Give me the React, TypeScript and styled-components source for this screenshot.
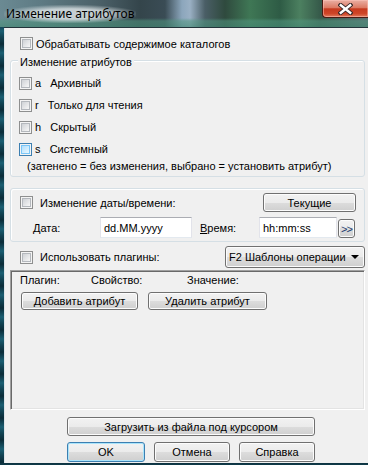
import styled, { createGlobalStyle } from 'styled-components';

const GlobalStyle = createGlobalStyle`
  html, body { margin: 0; padding: 0; }
  body {
    background: #0c2a34;
    font-family: "Liberation Sans", Arial, sans-serif;
    font-size: 11px;
    color: #000;
  }
`;

const Frame = styled.div`
  width: 368px;
  height: 465px;
  overflow: hidden;
  display: flex;
  flex-direction: column;
  background: repeating-linear-gradient(180deg, #0b2c38 0px, #1b5e72 9px, #124454 15px, #0b2c38 22px);
`;

const TitleBar = styled.div`
  height: 27px;
  flex-shrink: 0;
  display: flex;
  align-items: flex-start;
  background:
    linear-gradient(180deg, rgba(0, 0, 0, 0) 18px, rgba(80, 150, 128, 0.55) 21px, rgba(70, 140, 118, 0.65) 27px),
    linear-gradient(90deg, #6b8a93 0px, #5e7b84 40px, #4b6068 100px, #34454b 140px, #3a4c55 165px, #8ca6bc 182px,
      #9ab0c4 190px, #4a5e66 205px, #2f4a3e 225px, #3f7755 250px, #2e5b45 280px, #4c8060 300px, #365a4a 320px, #596e72 368px);
`;

const Title = styled.div`
  margin: 5px 0 0 4px;
  padding: 1px 2px;
  font-family: "Noto Sans", "Open Sans", sans-serif;
  font-size: 12px;
  line-height: 16px;
  color: #000;
  background: radial-gradient(ellipse at center, rgba(235, 240, 242, 0.75) 40%, rgba(235, 240, 242, 0) 75%);
  flex: 0 0 auto;
`;

const Spacer = styled.div`
  flex: 1;
`;

const CloseButton = styled.div`
  width: 46px;
  height: 18px;
  box-sizing: border-box;
  border: 1px solid #4a1a12;
  border-top: none;
  border-right: none;
  border-radius: 0 0 0 4px;
  display: flex;
  align-items: center;
  justify-content: center;
  background: linear-gradient(180deg, #eab0a4 0%, #dc7a64 45%, #c63a1f 52%, #cf4527 80%, #e07d5f 100%);
  box-shadow: inset 0 0 0 1px rgba(255, 200, 190, 0.5);
`;

const Client = styled.div`
  margin-left: 4px;
  height: 436px;
  box-sizing: border-box;
  border-top: 1px solid #22343a;
  background: #f0f0f0;
  padding: 0 3px 0 6px;
  display: flex;
  flex-direction: column;
  box-shadow: inset 1px 0 0 #dde4e8;
`;

const Box = styled.span<{ $hover?: boolean }>`
  position: relative;
  width: 13px;
  height: 13px;
  box-sizing: border-box;
  flex-shrink: 0;
  border: 1px solid ${(p) => (p.$hover ? '#3c7fb1' : '#8e8f8f')};
  background: #f4f4f4;
  &::after {
    content: "";
    position: absolute;
    left: 1px;
    top: 1px;
    right: 1px;
    bottom: 1px;
    box-sizing: border-box;
    border: 1px solid ${(p) => (p.$hover ? '#79c6f9' : '#b4b8bd')};
    background: ${(p) =>
      p.$hover
        ? 'linear-gradient(135deg, #b1dffd 0%, #e9f7fe 100%)'
        : 'linear-gradient(135deg, #cfd2d6 0%, #f7f7f7 100%)'};
  }
`;

const CheckRow = styled.label<{ $gap?: number; $indent?: number }>`
  display: flex;
  align-items: center;
  gap: ${(p) => p.$gap ?? 3}px;
  padding-left: ${(p) => p.$indent ?? 0}px;
  white-space: pre;
`;

const TopCheck = styled(CheckRow)`
  margin-top: 9px;
  height: 13px;
`;

const Group = styled.div<{ $mt: number }>`
  position: relative;
  margin-top: ${(p) => p.$mt}px;
  border: 1px solid #d5dfe5;
  border-radius: 3px;
  box-shadow: inset 1px 1px 0 #fff;
`;

const AttrGroup = styled(Group)`
  padding: 11px 0 4px 8px;
`;

const Caption = styled.span`
  position: absolute;
  top: -5px;
  left: 7px;
  padding: 0 2px;
  line-height: 13px;
  background: #f0f0f0;
`;

const AttrRow = styled(CheckRow)`
  height: 22px;
`;

const Note = styled.div`
  margin-left: 8px;
  line-height: 12px;
`;

const DateGroup = styled(Group)`
  padding: 4px 8px 3px 9px;
`;

const DateHead = styled.div`
  display: flex;
  justify-content: space-between;
  align-items: center;
  height: 19px;
`;

const DateRow = styled.div`
  margin-top: 5px;
  height: 21px;
  display: flex;
  align-items: center;
  padding-left: 13px;
`;

const FieldLabel = styled.span<{ $w: number; $ml?: number }>`
  width: ${(p) => p.$w}px;
  margin-left: ${(p) => p.$ml ?? 0}px;
  flex-shrink: 0;
`;

const TextBox = styled.div<{ $w: number }>`
  width: ${(p) => p.$w}px;
  height: 21px;
  box-sizing: border-box;
  background: #fff;
  border: 1px solid #e2e3ea;
  border-top-color: #abadb3;
  border-bottom-color: #e3e9ef;
  padding-left: 3px;
  display: flex;
  align-items: center;
  flex-shrink: 0;
`;

const Button = styled.div<{ $w: number; $h: number; $default?: boolean }>`
  width: ${(p) => p.$w}px;
  height: ${(p) => p.$h}px;
  box-sizing: border-box;
  flex-shrink: 0;
  display: flex;
  align-items: center;
  justify-content: center;
  border: 1px solid ${(p) => (p.$default ? '#3c7fb1' : '#707070')};
  border-radius: 3px;
  background: linear-gradient(180deg, #f2f2f2 0%, #ebebeb 50%, #dddddd 50%, #cfcfcf 100%);
  box-shadow: inset 0 0 0 1px ${(p) => (p.$default ? '#a9e4fb' : '#fcfcfc')};
  white-space: nowrap;
`;

const MoreButton = styled(Button)`
  margin-left: 1px;
  align-self: flex-end;
  color: #1e3c6e;
  letter-spacing: -1px;
`;

const PluginRow = styled.div`
  margin-top: 4px;
  height: 22px;
  display: flex;
  align-items: center;
  justify-content: space-between;
`;

const Combo = styled.div`
  width: 140px;
  height: 22px;
  box-sizing: border-box;
  border: 1px solid #707070;
  border-radius: 3px;
  background: linear-gradient(180deg, #f2f2f2 0%, #ebebeb 50%, #dddddd 50%, #cfcfcf 100%);
  box-shadow: inset 0 0 0 1px #fcfcfc;
  display: flex;
  align-items: center;
  justify-content: space-between;
  padding: 0 5px 0 3px;
`;

const Arrow = styled.span`
  width: 0;
  height: 0;
  border-left: 4px solid transparent;
  border-right: 4px solid transparent;
  border-top: 4px solid #000;
`;

const Panel = styled.div`
  margin-top: 2px;
  height: 140px;
  box-sizing: border-box;
  border-top: 1px solid #a0a0a0;
  border-left: 1px solid #a0a0a0;
  border-right: 1px solid #fff;
  border-bottom: 1px solid #fff;
  box-shadow: inset 1px 1px 0 #696969, inset -1px -1px 0 #e3e3e3;
  padding: 3px 0 0 9px;
`;

const PanelHead = styled.div`
  display: flex;
  line-height: 12px;
`;

const Col = styled.span<{ $w?: number }>`
  width: ${(p) => (p.$w ? `${p.$w}px` : 'auto')};
`;

const PanelActions = styled.div`
  margin-top: 6px;
  margin-left: 1px;
  display: flex;
  gap: 10px;
`;

const LoadRow = styled.div`
  margin-top: 7px;
  margin-left: 57px;
`;

const Footer = styled.div`
  margin-top: 6px;
  margin-left: 57px;
  display: flex;
  gap: 9px;
`;

const attrs = [
  { key: 'a', name: 'Архивный' },
  { key: 'r', name: 'Только для чтения' },
  { key: 'h', name: 'Скрытый' },
  { key: 's', name: 'Системный', hover: true },
];

export default function App() {
  return (
    <>
      <GlobalStyle />
      <Frame>
        <TitleBar>
          <Title>Изменение атрибутов</Title>
          <Spacer />
          <CloseButton>
            <svg width="15" height="12" viewBox="0 0 15 12">
              <path d="M2.5 2 L12.5 10 M12.5 2 L2.5 10" stroke="#3a2a2a" strokeWidth="4.2" strokeLinecap="square" />
              <path d="M2.8 2.3 L12.2 9.7 M12.2 2.3 L2.8 9.7" stroke="#fff" strokeWidth="2.4" strokeLinecap="square" />
            </svg>
          </CloseButton>
        </TitleBar>
        <Client>
          <TopCheck $indent={10}>
            <Box />
            Обрабатывать содержимое каталогов
          </TopCheck>

          <AttrGroup $mt={10}>
            <Caption>Изменение атрибутов</Caption>
            {attrs.map((a) => (
              <AttrRow key={a.key}>
                <Box $hover={a.hover} />
                {a.key + '   ' + a.name}
              </AttrRow>
            ))}
            <Note>(затенено = без изменения, выбрано = установить атрибут)</Note>
          </AttrGroup>

          <DateGroup $mt={11}>
            <DateHead>
              <CheckRow $gap={7}>
                <Box />
                Изменение даты/времени:
              </CheckRow>
              <Button $w={93} $h={19}>Текущие</Button>
            </DateHead>
            <DateRow>
              <FieldLabel $w={67}>
                <u>Д</u>ата:
              </FieldLabel>
              <TextBox $w={92}>dd.MM.yyyy</TextBox>
              <FieldLabel $w={59} $ml={8}>
                <u>В</u>ремя:
              </FieldLabel>
              <TextBox $w={78}>hh:mm:ss</TextBox>
              <MoreButton $w={17} $h={19}>&gt;&gt;</MoreButton>
            </DateRow>
          </DateGroup>

          <PluginRow>
            <CheckRow $gap={7} $indent={10}>
              <Box />
              Использовать плагины:
            </CheckRow>
            <Combo>
              <span>F2 Шаблоны операции</span>
              <Arrow />
            </Combo>
          </PluginRow>

          <Panel>
            <PanelHead>
              <Col $w={71}>Плагин:</Col>
              <Col $w={96}>Свойство:</Col>
              <Col>Значение:</Col>
            </PanelHead>
            <PanelActions>
              <Button $w={117} $h={18}>Добавить атрибут</Button>
              <Button $w={119} $h={18}>Удалить атрибут</Button>
            </PanelActions>
          </Panel>

          <LoadRow>
            <Button $w={248} $h={19}>Загрузить из файла под курсором</Button>
          </LoadRow>
          <Footer>
            <Button $w={78} $h={20} $default>OK</Button>
            <Button $w={76} $h={20}>Отмена</Button>
            <Button $w={76} $h={20}>Справка</Button>
          </Footer>
        </Client>
      </Frame>
    </>
  );
}
